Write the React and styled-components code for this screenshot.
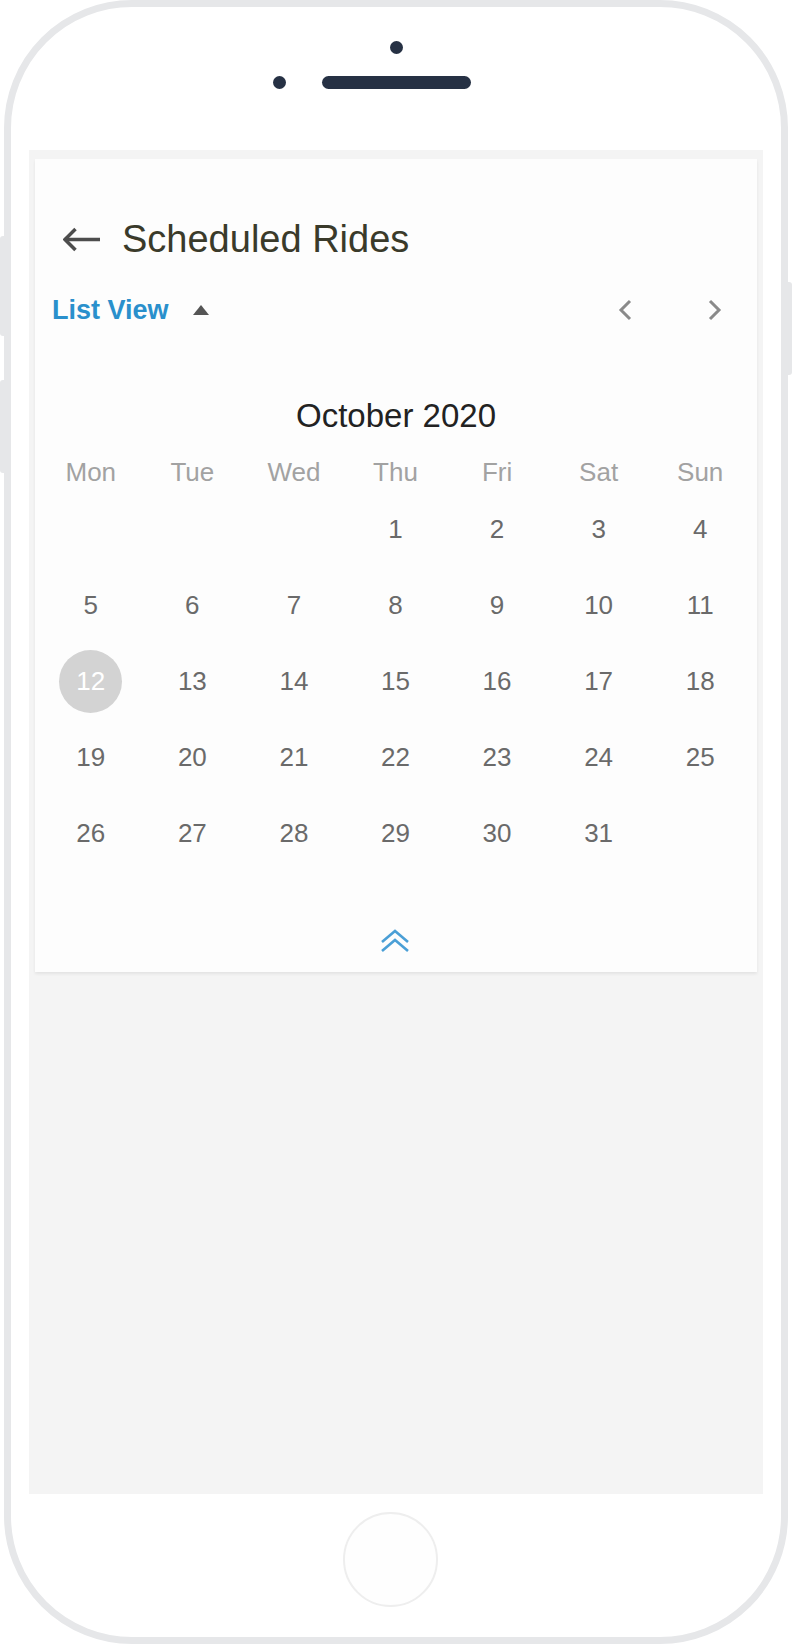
import React from "react";
import styled, { createGlobalStyle } from "styled-components";

const GlobalStyle = createGlobalStyle`
  html, body { margin: 0; padding: 0; background: #ffffff; }
  body { font-family: "Liberation Sans", Arial, Helvetica, sans-serif; }
  * { box-sizing: border-box; }
`;

const Page = styled.div`
  position: relative;
  width: 792px;
  height: 1644px;
  padding-left: 4px;
`;

const SideButton = styled.div`
  position: absolute;
  top: ${(p) => p.$top}px;
  height: ${(p) => p.$h}px;
  width: 5px;
  background: #e6e7e9;
  ${(p) => (p.$right ? "right: 0; border-radius: 0 3px 3px 0;" : "left: 0; border-radius: 3px 0 0 3px;")}
`;

const Phone = styled.div`
  width: 784px;
  height: 1644px;
  border: 7px solid #e6e7e9;
  border-radius: 128px;
  background: #ffffff;
  display: flex;
  flex-direction: column;
  align-items: center;
`;

const TopArea = styled.div`
  height: 143px;
  width: 100%;
  display: flex;
  flex-direction: column;
  align-items: center;
  padding-top: 34px;
`;

const Camera = styled.div`
  width: 13px;
  height: 13px;
  border-radius: 50%;
  background: #263144;
`;

const SpeakerRow = styled.div`
  margin-top: 22px;
  width: 100%;
  display: grid;
  grid-template-columns: 1fr auto 1fr;
  align-items: center;
`;

const SmallDot = styled.div`
  justify-self: end;
  margin-right: 36px;
  width: 13px;
  height: 13px;
  border-radius: 50%;
  background: #263144;
`;

const Speaker = styled.div`
  width: 149px;
  height: 13px;
  border-radius: 7px;
  background: #263144;
`;

const Screen = styled.div`
  width: 734px;
  height: 1344px;
  background: #f4f4f4;
  padding: 9px 6px 0;
  display: flex;
  flex-direction: column;
`;

const Card = styled.div`
  background: #fdfdfd;
  box-shadow: 0 2px 3px rgba(0, 0, 0, 0.07);
  padding: 50px 0 19px;
  display: flex;
  flex-direction: column;
`;

const HeaderRow = styled.div`
  height: 60px;
  display: flex;
  align-items: center;
  padding-left: 28px;
  gap: 22px;
`;

const Title = styled.h1`
  margin: 0;
  font-size: 38px;
  line-height: 60px;
  font-weight: 400;
  color: #3a3a2a;
`;

const ControlRow = styled.div`
  margin-top: 21px;
  height: 40px;
  display: flex;
  align-items: center;
  padding: 0 35px 0 17px;
`;

const ListViewLink = styled.span`
  font-size: 27px;
  line-height: 40px;
  font-weight: 700;
  color: #2a90cc;
`;

const Caret = styled.span`
  margin-left: 24px;
  width: 0;
  height: 0;
  border-left: 8px solid transparent;
  border-right: 8px solid transparent;
  border-bottom: 10px solid #555555;
`;

const NavGroup = styled.div`
  margin-left: auto;
  display: flex;
  align-items: center;
  gap: 76px;
`;

const MonthTitle = styled.div`
  margin-top: 66px;
  text-align: center;
  font-size: 33px;
  line-height: 40px;
  color: #222222;
`;

const Grid = styled.div`
  margin-top: 17px;
  padding: 0 6px 0 5px;
  display: grid;
  grid-template-columns: repeat(7, 1fr);
  grid-auto-rows: 76px;
  grid-template-rows: 38px;
`;

const WeekDay = styled.div`
  text-align: center;
  font-size: 26px;
  line-height: 38px;
  color: #a2a2a2;
`;

const DayCell = styled.div`
  display: flex;
  align-items: center;
  justify-content: center;
`;

const DayNumber = styled.span`
  width: 63px;
  height: 63px;
  border-radius: 50%;
  display: flex;
  align-items: center;
  justify-content: center;
  font-size: 26px;
  line-height: 1;
  color: ${(p) => (p.$selected ? "#ffffff" : "#6a6a6a")};
  background: ${(p) => (p.$selected ? "#d3d3d3" : "transparent")};
`;

const CollapseRow = styled.div`
  margin-top: 58px;
  display: flex;
  justify-content: center;
  padding-right: 2px;
`;

const BottomArea = styled.div`
  flex: 1;
  width: 100%;
  display: flex;
  justify-content: center;
  padding-top: 18px;
`;

const HomeButton = styled.div`
  width: 95px;
  height: 95px;
  margin-right: 12px;
  border-radius: 50%;
  border: 2px solid #eeeeee;
  background: #fefefe;
`;

const BackArrow = () => (
  <svg width="37" height="25" viewBox="0 0 37 25" fill="none">
    <path d="M2 12.5H37" stroke="#4d4d4d" strokeWidth="3.5" />
    <path d="M12.5 2L2 12.5L12.5 23" stroke="#4d4d4d" strokeWidth="3.5" strokeLinejoin="miter" />
  </svg>
);

const Chevron = ({ dir }) => (
  <svg width="14" height="22" viewBox="0 0 14 22" fill="none">
    {dir === "left" ? (
      <path d="M12 2L3 11L12 20" stroke="#8a8a8a" strokeWidth="3" />
    ) : (
      <path d="M2 2L11 11L2 20" stroke="#8a8a8a" strokeWidth="3" />
    )}
  </svg>
);

const DoubleChevronUp = () => (
  <svg width="30" height="24" viewBox="0 0 30 24" fill="none">
    <path d="M2 13L15 2L28 13" stroke="#4a9fd6" strokeWidth="2.6" />
    <path d="M2 22L15 11L28 22" stroke="#4a9fd6" strokeWidth="2.6" />
  </svg>
);

const weekdays = ["Mon", "Tue", "Wed", "Thu", "Fri", "Sat", "Sun"];
const days = [
  null, null, null, 1, 2, 3, 4,
  5, 6, 7, 8, 9, 10, 11,
  12, 13, 14, 15, 16, 17, 18,
  19, 20, 21, 22, 23, 24, 25,
  26, 27, 28, 29, 30, 31, null,
];

export default function App() {
  return (
    <Page>
      <GlobalStyle />
      <SideButton $top={236} $h={100} />
      <SideButton $top={380} $h={93} />
      <SideButton $right $top={282} $h={93} />
      <Phone>
        <TopArea>
          <Camera />
          <SpeakerRow>
            <SmallDot />
            <Speaker />
            <span />
          </SpeakerRow>
        </TopArea>
        <Screen>
          <Card>
            <HeaderRow>
              <BackArrow />
              <Title>Scheduled Rides</Title>
            </HeaderRow>
            <ControlRow>
              <ListViewLink>List View</ListViewLink>
              <Caret />
              <NavGroup>
                <Chevron dir="left" />
                <Chevron dir="right" />
              </NavGroup>
            </ControlRow>
            <MonthTitle>October 2020</MonthTitle>
            <Grid>
              {weekdays.map((w) => (
                <WeekDay key={w}>{w}</WeekDay>
              ))}
              {days.map((d, i) => (
                <DayCell key={i}>
                  {d && <DayNumber $selected={d === 12}>{d}</DayNumber>}
                </DayCell>
              ))}
            </Grid>
            <CollapseRow>
              <DoubleChevronUp />
            </CollapseRow>
          </Card>
        </Screen>
        <BottomArea>
          <HomeButton />
        </BottomArea>
      </Phone>
    </Page>
  );
}
